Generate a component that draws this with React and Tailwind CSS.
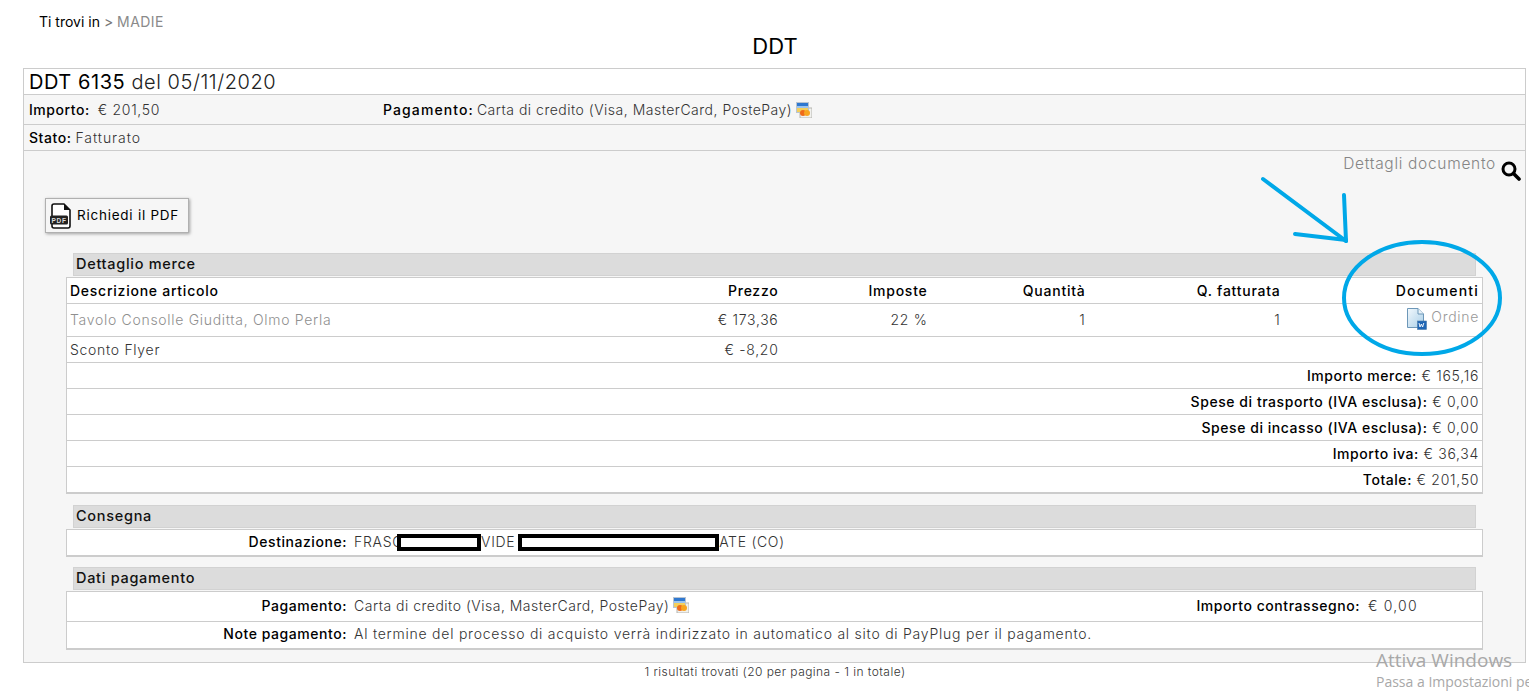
const font = { fontFamily: "Inter, 'Noto Sans', sans-serif" };

const CardIcon = () => (
  <svg width="16" height="16" viewBox="0 0 16 16" className="shrink-0">
    <rect x="4" y="6" width="12" height="10" fill="#f1f1ee" stroke="#b5b5b0" />
    <rect x="0.5" y="0.5" width="12" height="10" fill="#f4f4f0" stroke="#b9c4d0" />
    <rect x="1" y="1" width="11" height="3" fill="#2f78d0" />
    <rect x="1" y="4" width="11" height="2" fill="#9cc4ee" />
    <rect x="1" y="6" width="11" height="4" fill="#f4cf5c" />
    <circle cx="7" cy="11" r="3" fill="#ef6a1a" />
    <circle cx="11" cy="11" r="3" fill="#f8a51f" />
  </svg>
);

const WordDocIcon = () => (
  <svg width="20" height="22" viewBox="0 0 20 22" className="shrink-0">
    <defs>
      <linearGradient id="docfill" x1="0" y1="0" x2="1" y2="1">
        <stop offset="0" stopColor="#f2f8fc" />
        <stop offset="1" stopColor="#a9cfe8" />
      </linearGradient>
    </defs>
    <path d="M0.5 0.5H11L16.5 6V19.5H0.5Z" fill="url(#docfill)" stroke="#6d97b8" />
    <path d="M11 0.5V6H16.5" fill="#e8f2f9" stroke="#6d97b8" />
    <rect x="10.5" y="13" width="9" height="8.5" fill="#1f66b5" stroke="#4a7ba8" strokeWidth="0.6" />
    <path d="M12 15l1 4 1.4-3 1.2 3 1.2-4" fill="none" stroke="#fff" strokeWidth="0.9" />
  </svg>
);

const PdfIcon = () => (
  <svg width="22" height="26" viewBox="0 0 22 26" className="shrink-0">
    <path d="M4 1H14L20 7V23a2 2 0 0 1-2 2H4a2 2 0 0 1-2-2V3a2 2 0 0 1 2-2Z" fill="#fff" stroke="#111" strokeWidth="1.6" />
    <path d="M14 1V7H20Z" fill="#111" />
    <rect x="0" y="12.5" width="18" height="9" rx="1.5" fill="#222" />
    <text x="9" y="20" textAnchor="middle" fontSize="6.5" fontWeight="700" fill="#ddd" fontFamily="Liberation Sans, sans-serif">PDF</text>
  </svg>
);

const SearchIcon = () => (
  <svg width="20" height="20" viewBox="0 0 20 20" className="shrink-0">
    <circle cx="8" cy="8" r="6" fill="none" stroke="#000" strokeWidth="3" />
    <path d="M12.5 12.5L18 18" stroke="#000" strokeWidth="3.6" strokeLinecap="round" />
  </svg>
);

const Section = ({ children }) => (
  <div className="ml-[49px] w-[1403px] h-[23px] bg-[#dcdcdc] border border-[#d2d2d2] pl-[2px] pb-[1px] flex items-center text-[14.5px] font-medium tracking-[0.7px] text-[#111]">
    {children}
  </div>
);

const Label = ({ children, className = "" }) => (
  <b className={`font-medium text-black tracking-[0.55px] ${className}`}>{children}</b>
);

const Redacted = ({ className }) => (
  <span className={`inline-block h-[17px] border-4 border-black bg-white align-middle ${className}`} />
);

const totals = [
  ["Importo merce:", "€ 165,16"],
  ["Spese di trasporto (IVA esclusa):", "€ 0,00"],
  ["Spese di incasso (IVA esclusa):", "€ 0,00"],
  ["Importo iva:", "€ 36,34"],
  ["Totale:", "€ 201,50"],
];

export default function App() {
  return (
    <div className="relative w-[1529px] h-[692px] overflow-hidden bg-white text-[14px] text-[#333]" style={font}>
      <div className="h-[32px] pt-[13px] pl-[39px] text-[14px] leading-[18px] text-black">
        Ti trovi in <span className="text-[#777]">&gt;</span> <span className="text-[#8a8a8a] tracking-[0.4px]">MADIE</span>
      </div>
      <h1 className="h-[36px] pl-[21px] text-center text-[22px] leading-[28px] font-normal text-black">DDT</h1>

      <div className="ml-[23px] w-[1503px] h-[595px] border border-[#cccccc] bg-[#f6f6f6]">
        <div className="h-[26px] bg-white border-b border-[#cccccc] pl-[5px] flex items-center text-[20px] font-light tracking-[0.55px] text-[#222]">
          <span className="font-normal text-black">DDT 6135</span>&nbsp;del 05/11/2020
        </div>
        <div className="h-[30px] border-b border-[#cccccc] pl-[5px] flex items-center font-light">
          <span className="w-[354px] flex">
            <Label className="tracking-[0.3px]">Importo:</Label>
            <span className="ml-[8px] tracking-[0.7px]">€ 201,50</span>
          </span>
          <Label className="tracking-[1.1px]">Pagamento:</Label>
          <span className="ml-[3px] tracking-[0.5px]">Carta di credito (Visa, MasterCard, PostePay)</span>
          <span className="ml-[4px]"><CardIcon /></span>
        </div>
        <div className="h-[26px] border-b border-[#cccccc] pl-[5px] flex items-center font-light">
          <Label className="tracking-[0.3px]">Stato:</Label>
          <span className="ml-[4px] tracking-[0.95px]">Fatturato</span>
        </div>

        <div className="h-[47px] pr-[4px] pt-[4px] flex justify-end items-start">
          <span className="text-[#858585] text-[15.5px] font-light tracking-[0.7px] leading-[18px]">Dettagli documento</span>
          <span className="ml-[5px] mt-[6px]"><SearchIcon /></span>
        </div>

        <button className="ml-[21px] w-[144px] h-[35px] flex items-center gap-[5px] pl-[4px] bg-[#f6f6f6] border border-[#b0b0b0] shadow-[1px_1px_3px_rgba(0,0,0,0.35)] text-[13.5px] tracking-[0.75px] text-black">
          <PdfIcon />
          Richiedi il PDF
        </button>

        <div className="h-[20px]" />
        <Section>Dettaglio merce</Section>

        <table className="mt-[1px] ml-[42px] w-[1417px] table-fixed border-collapse bg-white border border-[#cccccc] border-b-2 tracking-[0.7px] font-light">
          <colgroup>
            <col className="w-[600px]" />
            <col className="w-[116px]" />
            <col className="w-[149px]" />
            <col className="w-[158px]" />
            <col className="w-[195px]" />
            <col className="w-[198px]" />
          </colgroup>
          <tbody>
            <tr className="h-[26px] border-b border-[#cccccc] font-medium text-black tracking-[0.75px]">
              <td className="pl-[3px]">Descrizione articolo</td>
              <td className="pr-[4px] text-right">Prezzo</td>
              <td className="pr-[4px] text-right">Imposte</td>
              <td className="pr-[4px] text-right">Quantità</td>
              <td className="pr-[4px] text-right">Q. fatturata</td>
              <td className="pr-[3px] text-right tracking-[1.2px]">Documenti</td>
            </tr>
            <tr className="h-[33px] border-b border-[#cccccc] [&>td]:pb-[2px]">
              <td className="pl-[3px] text-[#8f8f8f]">Tavolo Consolle Giuditta, Olmo Perla</td>
              <td className="pr-[4px] text-right">€ 173,36</td>
              <td className="pr-[4px] text-right">22 %</td>
              <td className="pr-[4px] text-right">1</td>
              <td className="pr-[4px] text-right">1</td>
              <td className="pr-[3px]">
                <div className="flex justify-end items-start gap-[4px] text-[#999]">
                  <WordDocIcon />
                  <span className="mt-[1px] leading-[16px]">Ordine</span>
                </div>
              </td>
            </tr>
            <tr className="h-[26px] border-b border-[#cccccc]">
              <td className="pl-[3px]">Sconto Flyer</td>
              <td className="pr-[4px] text-right">€ -8,20</td>
              <td colSpan={4} />
            </tr>
            {totals.map(([label, value], i) => (
              <tr key={label} className={`h-[26px] ${i < totals.length - 1 ? "border-b border-[#cccccc]" : ""}`}>
                <td colSpan={6} className="pr-[3px] text-right">
                  <Label>{label}</Label> {value}
                </td>
              </tr>
            ))}
          </tbody>
        </table>

        <div className="h-[11px]" />
        <Section>Consegna</Section>
        <div className="mt-[1px] ml-[42px] w-[1417px] h-[28px] pb-[2px] bg-white border border-[#cccccc] border-b-2 flex items-center font-light">
          <Label className="w-[280px] text-right">Destinazione:</Label>
          <span className="ml-[7px] whitespace-nowrap tracking-[0.7px]">
            FRASC<Redacted className="w-[84px] -ml-[6px]" />VIDE V<Redacted className="w-[201px] -ml-[12px]" />ATE (CO)
          </span>
        </div>

        <div className="h-[10px]" />
        <Section>Dati pagamento</Section>
        <div className="mt-[1px] ml-[42px] w-[1417px] bg-white border border-[#cccccc] border-b-2 font-light">
          <div className="h-[30px] pb-[2px] border-b border-[#cccccc] flex items-center">
            <Label className="w-[280px] text-right">Pagamento:</Label>
            <span className="ml-[7px] w-[319px] tracking-[0.5px]">Carta di credito (Visa, MasterCard, PostePay)</span>
            <CardIcon />
            <Label className="ml-[503px] w-[168px] text-right whitespace-nowrap">Importo contrassegno:</Label>
            <span className="ml-[8px] tracking-[1.2px]">€ 0,00</span>
          </div>
          <div className="h-[26px] pb-[2px] flex items-center">
            <Label className="w-[280px] text-right">Note pagamento:</Label>
            <span className="ml-[7px] tracking-[0.76px]">Al termine del processo di acquisto verrà indirizzato in automatico al sito di PayPlug per il pagamento.</span>
          </div>
        </div>
      </div>

      <p className="mt-[1px] pl-[21px] text-center text-[12px] leading-[16px] font-light tracking-[0.45px] text-[#333]">
        1 risultati trovati (20 per pagina - 1 in totale)
      </p>

      {/* hand-drawn annotation on top of the page */}
      <svg className="absolute inset-0 pointer-events-none" width="1529" height="692" viewBox="0 0 1529 692">
        <g fill="none" stroke="#00a8e8" strokeWidth="4" strokeLinecap="round">
          <path d="M1263 179L1346 241" />
          <path d="M1344 195L1346 241" />
          <path d="M1295 234L1346 240" />
          <ellipse cx="1422" cy="298" rx="78" ry="56" />
        </g>
      </svg>

      {/* windows activation watermark */}
      <div className="absolute left-[1376px] top-[648px] w-[153px] whitespace-nowrap text-[#a8a8a8] pointer-events-none" style={{ fontFamily: "'Open Sans', sans-serif" }}>
        <div className="text-[19px] leading-[24px]">Attiva Windows</div>
        <div className="text-[14px] leading-[20px]">Passa a Impostazioni pe</div>
      </div>
    </div>
  );
}
